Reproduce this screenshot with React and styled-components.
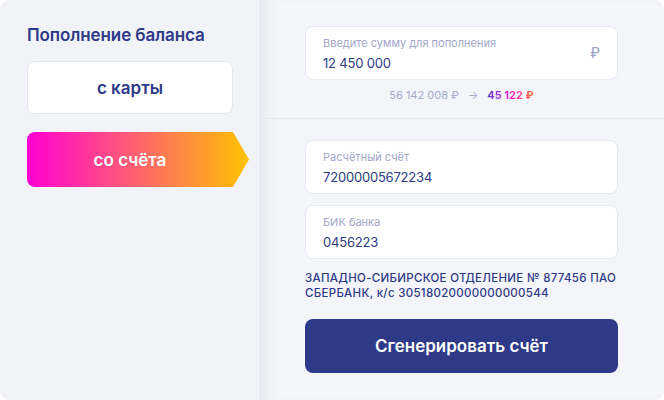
import React from 'react'
import styled, { createGlobalStyle } from 'styled-components'

const GlobalStyle = createGlobalStyle`
    * { box-sizing: border-box; }
    body {
        margin: 0;
        background: #ffffff;
        font-family: Inter, "Noto Sans", sans-serif;
    }
`

const Card = styled.div`
    width: 664px;
    height: 400px;
    display: grid;
    grid-template-columns: 259px 1fr;
    border-radius: 10px;
    overflow: hidden;
    background: #f2f3f8;
`

const Sidebar = styled.aside`
    padding: 25px 0 0 27px;
    display: flex;
    flex-direction: column;
`

const Title = styled.h2`
    margin: 0 0 16px;
    font-size: 17px;
    font-weight: 600;
    color: #2e3a87;
    letter-spacing: -0.1px;
`

const Tab = styled.button`
    width: ${p => (p.active ? '222px' : '206px')};
    height: ${p => (p.active ? '55px' : '53px')};
    margin-bottom: 18px;
    border: ${p => (p.active ? 'none' : '1px solid #e3e6f1')};
    border-radius: 8px;
    padding: 0 ${p => (p.active ? '16px' : '0')} 0 0;
    font-family: inherit;
    font-size: 17px;
    font-weight: 600;
    color: ${p => (p.active ? '#ffffff' : '#2e3a87')};
    background: ${p => (p.active ? 'linear-gradient(90deg, #ff00d2 0%, #ff5a78 45%, #ffc300 100%)' : '#ffffff')};
    clip-path: ${p => (p.active
        ? 'polygon(0 0, 206px 0, 222px 50%, 206px 100%, 0 100%)'
        : 'none')};
    cursor: pointer;
`

const Main = styled.section`
    display: flex;
    flex-direction: column;
    background: #f4f5fa;
    box-shadow: inset 14px 0 16px -10px rgba(46, 58, 135, 0.1);
`

const Top = styled.div`
    padding: 26px 46px 0;
    height: 119px;
    border-bottom: 1.5px solid #e6e8f0;
`

const Bottom = styled.div`
    padding: 21px 46px 0;
    display: flex;
    flex-direction: column;
`

const Field = styled.label`
    display: flex;
    align-items: center;
    justify-content: space-between;
    height: 54px;
    padding: 0 17px;
    margin-bottom: ${p => p.gap || 0}px;
    background: #ffffff;
    border: 1px solid #e6e8f2;
    border-radius: 8px;
`

const FieldText = styled.div`
    display: flex;
    flex-direction: column;
    gap: 5px;
    padding-top: 1px;
`

const Label = styled.span`
    font-size: 11px;
    color: #a2a6c9;
`

const Value = styled.span`
    font-size: 13px;
    letter-spacing: -0.2px;
    color: #2e3a87;
`

const Ruble = styled.span`
    font-size: 14px;
    font-weight: 500;
    color: #a2a6c9;
    margin-top: -2px;
`

const Convert = styled.div`
    margin-top: 8px;
    display: flex;
    justify-content: center;
    align-items: center;
    gap: 9px;
    font-size: 11px;
    color: #a6aacb;
`

const Result = styled.span`
    font-weight: 700;
    background: linear-gradient(90deg, #5b3fd3 0%, #c22bd9 35%, #ff1fc1 55%, #ff7a2a 100%);
    -webkit-background-clip: text;
    background-clip: text;
    color: transparent;
`

const BankInfo = styled.p`
    margin: 12px 0 0;
    font-size: 11.5px;
    line-height: 15px;
    font-weight: 500;
    letter-spacing: 0.3px;
    color: #2e3a87;
    white-space: nowrap;
`

const Submit = styled.button`
    margin-top: 18px;
    height: 54px;
    border: none;
    border-radius: 8px;
    background: #2e3a87;
    color: #ffffff;
    font-family: inherit;
    font-size: 17px;
    font-weight: 600;
    cursor: pointer;
`

function App() {
    return (
        <>
            <GlobalStyle />
            <Card>
                <Sidebar>
                    <Title>Пополнение баланса</Title>
                    <Tab>с карты</Tab>
                    <Tab active>со счёта</Tab>
                </Sidebar>

                <Main>
                    <Top>
                        <Field>
                            <FieldText>
                                <Label>Введите сумму для пополнения</Label>
                                <Value>12 450 000</Value>
                            </FieldText>
                            <Ruble>₽</Ruble>
                        </Field>
                        <Convert>
                            <span>56 142 008 ₽</span>
                            <span>→</span>
                            <Result>45 122 ₽</Result>
                        </Convert>
                    </Top>

                    <Bottom>
                        <Field gap={11}>
                            <FieldText>
                                <Label>Расчётный счёт</Label>
                                <Value>72000005672234</Value>
                            </FieldText>
                        </Field>
                        <Field>
                            <FieldText>
                                <Label>БИК банка</Label>
                                <Value>0456223</Value>
                            </FieldText>
                        </Field>
                        <BankInfo>
                            ЗАПАДНО-СИБИРСКОЕ ОТДЕЛЕНИЕ № 877456 ПАО<br />
                            СБЕРБАНК, к/с 30518020000000000544
                        </BankInfo>
                        <Submit>Сгенерировать счёт</Submit>
                    </Bottom>
                </Main>
            </Card>
        </>
    )
}

export default App
